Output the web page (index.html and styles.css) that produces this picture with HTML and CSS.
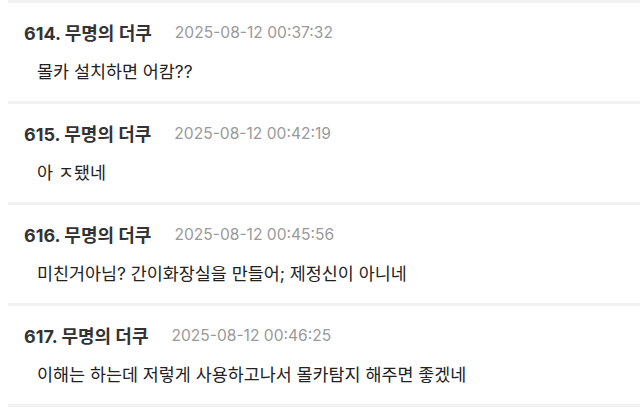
FILE: index.html
```html
<!DOCTYPE html>
<html lang="ko">
<head>
<meta charset="utf-8">
<link rel="stylesheet" href="styles.css">
</head>
<body>
<ul class="comments">
  <li class="comment">
    <div class="head"><span class="name">614. 무명의 더쿠</span><span class="date">2025-08-12 00:37:32</span></div>
    <p class="body">몰카 설치하면 어캄??</p>
  </li>
  <li class="comment">
    <div class="head"><span class="name">615. 무명의 더쿠</span><span class="date">2025-08-12 00:42:19</span></div>
    <p class="body">아 ㅈ됐네</p>
  </li>
  <li class="comment">
    <div class="head"><span class="name">616. 무명의 더쿠</span><span class="date">2025-08-12 00:45:56</span></div>
    <p class="body">미친거아님? 간이화장실을 만들어; 제정신이 아니네</p>
  </li>
  <li class="comment">
    <div class="head"><span class="name">617. 무명의 더쿠</span><span class="date">2025-08-12 00:46:25</span></div>
    <p class="body">이해는 하는데 저렇게 사용하고나서 몰카탐지 해주면 좋겠네</p>
  </li>
</ul>
</body>
</html>
```

FILE: styles.css
```css
html, body {
  margin: 0;
  padding: 0;
  background: #ffffff;
}
body {
  font-family: Inter, "Noto Sans CJK KR", sans-serif;
  color: #222222;
}
.comments {
  list-style: none;
  margin: 0 0 0 8px;
  padding: 0;
}
.comment {
  border-top: 3px solid #f1f1f1;
  padding: 17px 0 17px 16px;
}
.comment:last-child {
  border-bottom: 3px solid #f1f1f1;
}
.head {
  display: flex;
  align-items: center;
  gap: 23px;
  height: 24px;
}
.name {
  font-size: 18px;
  font-weight: 700;
  color: #333333;
}
.date {
  font-size: 15.6px;
  color: #9a9a9a;
}
.body {
  margin: 16px 0 0 13px;
  line-height: 24px;
  font-size: 17.4px;
  color: #222222;
}
```
